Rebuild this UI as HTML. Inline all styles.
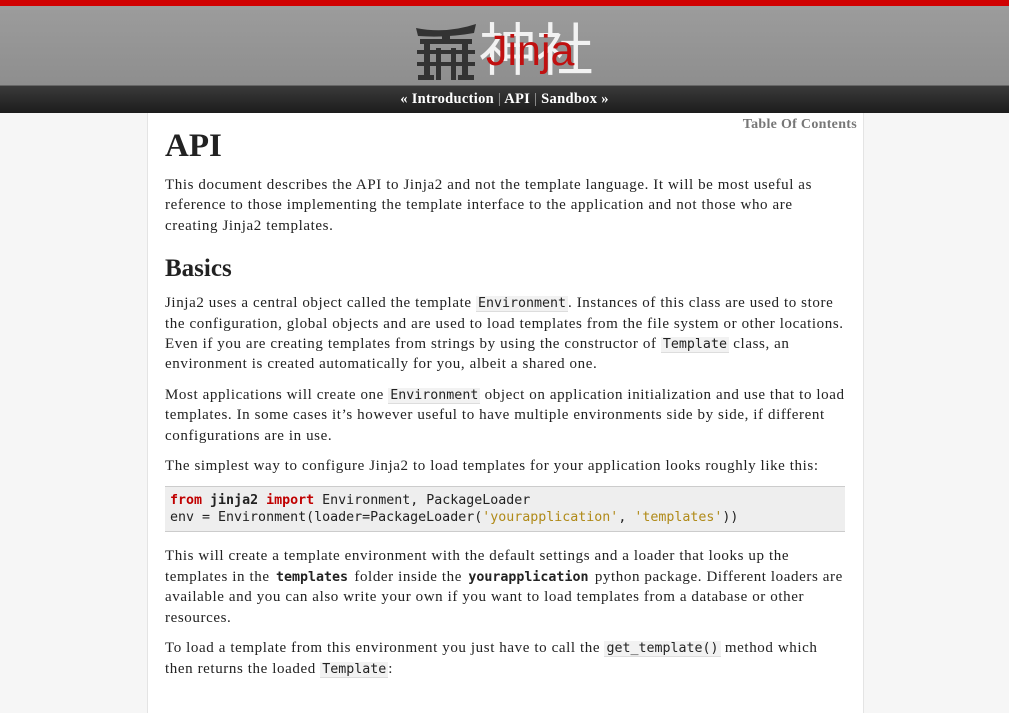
<!DOCTYPE html>
<html><head><meta charset="utf-8"><style>
*{margin:0;padding:0;box-sizing:border-box}
body{width:1009px;height:679px;overflow:hidden;background:#f6f6f6;font-family:"Liberation Serif","DejaVu Serif",serif;color:#222}
.top{height:6px;background:#d00000}
.hdr{height:80px;background:linear-gradient(#9c9c9c,#8e8e8e);position:relative;border-bottom:1px solid #666}
.nav{height:27px;background:linear-gradient(#3a3a3a,#1c1c1c);color:#fff;text-align:center;font-weight:bold;font-size:14.5px;line-height:27px;letter-spacing:0.3px}
.nav .s{color:#aaa;font-weight:normal}
.box{position:absolute;left:147px;top:113px;width:717px;height:600px;background:#fff;border-left:1px solid #e4e4e4;border-right:1px solid #e4e4e4}
.toc{position:absolute;right:6px;top:4px;font-size:14px;font-weight:bold;color:#777;letter-spacing:0.3px}
.c{position:absolute;left:17px;top:14px;width:680px;white-space:nowrap}
h1{font-size:33px;line-height:38px;margin-bottom:10px}
h2{font-size:25px;line-height:30px;margin:18px 0 9px}
p{font-size:15px;line-height:20.4px;margin-bottom:10px;letter-spacing:0.6px}
code{font-family:"DejaVu Sans Mono",monospace;font-size:13.3px;line-height:1;background:#f2f2f2;border-bottom:1px solid #ddd;padding:0 2px;letter-spacing:0}
code.b{font-weight:bold;background:none;border:none}
pre{font-family:"DejaVu Sans Mono",monospace;font-size:13.3px;line-height:17px;background:#eeeeee;border-top:1px solid #ccc;border-bottom:1px solid #ccc;padding:5px 5px;margin:4px 0 14px 0}
.k{color:#c00000;font-weight:bold}.n{font-weight:bold}.s1{color:#b08a18}
</style></head><body>
<div class="top"></div>
<div class="hdr">
<svg style="position:absolute;left:416px;top:18px" width="60" height="58" viewBox="0 0 60 58" fill="#333">
<path d="M0 4 Q30 10 60 0 L58 9 Q30 14 2 12Z"/>
<rect x="4" y="15" width="52" height="5"/>
<rect x="26" y="10" width="8" height="10"/>
<rect x="8" y="20" width="6" height="36"/><rect x="46" y="20" width="6" height="36"/>
<rect x="20" y="24" width="5" height="32"/><rect x="35" y="24" width="5" height="32"/>
<rect x="1" y="26" width="58" height="4"/><rect x="1" y="38" width="58" height="4"/>
<rect x="2" y="51" width="16" height="5"/><rect x="42" y="51" width="16" height="5"/>
</svg>
<div style="position:absolute;left:479px;top:4px;font-family:'Noto Sans CJK JP',sans-serif;font-size:57px;line-height:72px;color:#f2f2f2">神社</div>
<div style="position:absolute;left:486px;top:20px;font-family:'Liberation Sans',sans-serif;font-size:43px;line-height:50px;color:#c01010">Jinja</div>
</div>
<div class="nav">« Introduction <span class="s">|</span> API <span class="s">|</span> Sandbox »</div>
<div class="box">
<div class="toc">Table Of Contents</div>
<div class="c">
<h1>API</h1>
<p>This document describes the API to Jinja2 and not the template language. It will be most useful as<br>reference to those implementing the template interface to the application and not those who are<br>creating Jinja2 templates.</p>
<h2>Basics</h2>
<p>Jinja2 uses a central object called the template <code>Environment</code>. Instances of this class are used to store<br>the configuration, global objects and are used to load templates from the file system or other locations.<br>Even if you are creating templates from strings by using the constructor of <code>Template</code> class, an<br>environment is created automatically for you, albeit a shared one.</p>
<p>Most applications will create one <code>Environment</code> object on application initialization and use that to load<br>templates. In some cases it’s however useful to have multiple environments side by side, if different<br>configurations are in use.</p>
<p>The simplest way to configure Jinja2 to load templates for your application looks roughly like this:</p>
<pre><span class="k">from</span> <span class="n">jinja2</span> <span class="k">import</span> Environment, PackageLoader
env = Environment(loader=PackageLoader(<span class="s1">'yourapplication'</span>, <span class="s1">'templates'</span>))</pre>
<p>This will create a template environment with the default settings and a loader that looks up the<br>templates in the <code class="b">templates</code> folder inside the <code class="b">yourapplication</code> python package. Different loaders are<br>available and you can also write your own if you want to load templates from a database or other<br>resources.</p>
<p>To load a template from this environment you just have to call the <code>get_template()</code> method which<br>then returns the loaded <code>Template</code>:</p>
</div></div>
</body></html>
